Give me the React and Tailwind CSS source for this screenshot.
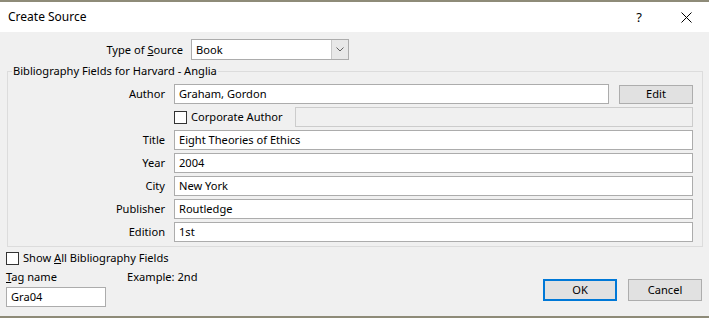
import React from "react";

function Checkbox() {
  return <span className="block w-[13px] h-[13px] border border-[#333333] bg-white shrink-0" />;
}

function Field({ value, className = "" }) {
  return (
    <div className={`h-[20px] border border-[#acacac] bg-white flex items-center px-[4px] ${className}`}>
      <span className="leading-none">{value}</span>
    </div>
  );
}

function Label({ children }) {
  return <div className="text-right leading-none">{children}</div>;
}

export default function App() {
  return (
    <div className="w-[709px] h-[318px] flex flex-col border-t-2 border-b-2 border-[#8e8b78] font-['Noto_Sans',sans-serif] text-[11.1px] leading-[16px] text-black">
      <div className="h-[30px] bg-white flex items-center pl-[8px] shrink-0 text-[12px]">
        <span className="flex-1">Create Source</span>
        <span className="mr-[39px] text-[13px]">?</span>
        <svg width="11" height="11" viewBox="0 0 11 11" className="mr-[17px]">
          <path d="M0.5 0.5 L10.5 10.5 M10.5 0.5 L0.5 10.5" stroke="#000" strokeWidth="1" fill="none" />
        </svg>
      </div>
      <div className="flex-1 bg-[#f0f0f0] flex flex-col pl-[6px] pr-[6px]">
        <div className="flex items-center mt-[7px]">
          <div className="w-[177px] text-right">
            Type of <span className="underline">S</span>ource
          </div>
          <div className="ml-[8px] w-[158px] h-[21px] border border-[#acacac] bg-white flex">
            <span className="flex-1 pl-[4px] flex items-center">Book</span>
            <div className="w-[17px] border-l border-[#c8c8c8] bg-[#e8e8e8] flex items-center justify-center">
              <svg width="8" height="5" viewBox="0 0 8 5">
                <path d="M0.5 0.5 L4 4 L7.5 0.5" stroke="#606060" strokeWidth="1" fill="none" />
              </svg>
            </div>
          </div>
        </div>
        <fieldset className="mt-[3px] ml-[1px] border border-[#dcdcdc] px-0 pb-[4px]">
          <legend className="ml-[4px] px-[1px] leading-[16px]">Bibliography Fields for Harvard - Anglia</legend>
          <div className="grid grid-cols-[157px_1fr] gap-x-[9px] gap-y-[3px] pr-[9px] pt-[5px] items-center">
            <Label>Author</Label>
            <div className="flex items-center">
              <Field value="Graham, Gordon" className="flex-1" />
              <div className="ml-[10px] w-[74px] h-[19px] border border-[#adadad] bg-[#e1e1e1] flex items-center justify-center">Edit</div>
            </div>
            <div />
            <div className="flex items-center h-[20px]">
              <Checkbox />
              <span className="ml-[4px] w-[104px]">Corporate Author</span>
              <div className="flex-1 h-[20px] border border-[#cccccc] bg-[#f0f0f0]" />
            </div>
            <Label>Title</Label>
            <Field value="Eight Theories of Ethics" />
            <Label>Year</Label>
            <Field value="2004" />
            <Label>City</Label>
            <Field value="New York" />
            <Label>Publisher</Label>
            <Field value="Routledge" />
            <Label>Edition</Label>
            <Field value="1st" />
          </div>
        </fieldset>
        <div className="flex items-end">
          <div className="flex flex-col">
            <div className="flex items-center mt-[3px]">
              <Checkbox />
              <span className="ml-[4px]">Show <span className="underline">A</span>ll Bibliography Fields</span>
            </div>
            <div className="flex mt-[3px]">
              <span className="w-[121px]"><span className="underline">T</span>ag name</span>
              <span>Example: 2nd</span>
            </div>
            <Field value="Gra04" className="mt-[2px] w-[100px]" />
          </div>
          <div className="flex-1" />
          <div className="flex mb-[6px] mr-[1px]">
            <div className="w-[74px] h-[22px] border-2 border-[#0078d7] bg-[#e1e1e1] flex items-center justify-center">OK</div>
            <div className="ml-[11px] w-[74px] h-[22px] border border-[#adadad] bg-[#e1e1e1] flex items-center justify-center">Cancel</div>
          </div>
        </div>
      </div>
    </div>
  );
}
